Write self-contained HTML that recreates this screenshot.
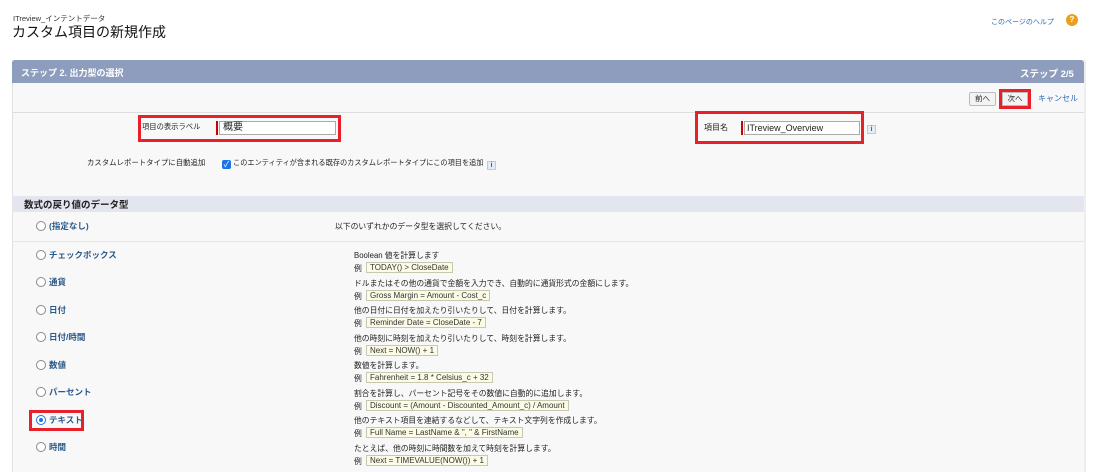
<!DOCTYPE html>
<html><head><meta charset="utf-8"><style>
*{margin:0;padding:0;box-sizing:border-box}
body{width:1098px;height:472px;background:#fff;font-family:"Liberation Sans","Noto Sans CJK JP",sans-serif;position:relative;overflow:hidden;color:#222;font-size:8px}
.a{position:absolute;white-space:nowrap}
.lbl{color:#2a5a8a;font-weight:bold;font-size:8.5px}
.d{font-size:7.8px}
.rad{position:absolute;width:10px;height:10px;border:1px solid #888;border-radius:50%;background:#fff}
.ex{position:absolute;background:#fbfbe6;border:1px solid #c8c8b0;padding:0 3px;height:11px;line-height:9px;font-size:8px;color:#333}
.red{position:absolute;border:3px solid #e8202a}
</style></head><body>
<div class="a" style="left:13px;top:13px;font-size:7.5px;color:#333">ITreview_インテントデータ</div>
<div class="a" style="left:12px;top:22px;font-size:14px;color:#111">カスタム項目の新規作成</div>
<div class="a" style="left:991px;top:17px;font-size:7px;color:#2a6ab0">このページのヘルプ</div>
<div class="a" style="left:1066px;top:14px;width:12px;height:12px;border-radius:50%;background:#e8a020;color:#fff;font-size:8px;font-weight:bold;text-align:center;line-height:12px">?</div>

<div class="a" style="left:12px;top:60px;width:1072px;height:412px;background:#f8f8f8;border-left:1px solid #e0e0e0"></div>
<div class="a" style="left:12px;top:60px;width:1072px;height:23px;background:#8e9dbe;border-radius:3px 3px 0 0"></div>
<div class="a" style="left:21px;top:66px;color:#fff;font-weight:bold;font-size:9px">ステップ 2. 出力型の選択</div>
<div class="a" style="left:1020px;top:66px;color:#fff;font-weight:bold;font-size:9.5px">ステップ 2/5</div>
<div class="a" style="left:1084px;top:60px;width:2px;height:412px;background:#eee"></div>

<div class="a" style="left:12px;top:112px;width:1072px;height:1px;background:#ddd"></div>
<div class="a" style="left:969px;top:92px;width:27px;height:14px;border:1px solid #bbb;border-radius:2px;background:#f3f3f3;font-size:7.5px;text-align:center;line-height:12px">前へ</div>
<div class="a" style="left:1002px;top:92px;width:26px;height:14px;border:1px solid #bbb;background:#f3f3f3;font-size:7.5px;text-align:center;line-height:12px">次へ</div>
<div class="red" style="left:999px;top:89px;width:32px;height:20px"></div>
<div class="a" style="left:1038px;top:93px;font-size:8px;color:#2a6ab0">キャンセル</div>

<div class="red" style="left:138px;top:115px;width:203px;height:27px"></div>
<div class="a" style="left:142px;top:122px;font-size:7.3px">項目の表示ラベル</div>
<div class="a" style="left:216px;top:121px;width:2px;height:14px;background:#c00"></div>
<div class="a" style="left:219px;top:121px;width:117px;height:14px;background:#fff;border:1px solid #aaa;font-size:10px;line-height:12px;padding-left:3px">概要</div>

<div class="red" style="left:695px;top:111px;width:169px;height:33px"></div>
<div class="a" style="left:704px;top:122px;font-size:8px">項目名</div>
<div class="a" style="left:741px;top:121px;width:2px;height:14px;background:#c00"></div>
<div class="a" style="left:744px;top:121px;width:116px;height:14px;background:#fff;border:1px solid #aaa;font-size:9px;line-height:12px;padding-left:2px">ITreview_Overview</div>
<div class="a" style="left:867px;top:125px;width:9px;height:9px;background:#e4ecf6;border:1px solid #bcd;color:#2a6ab0;font-size:7px;text-align:center;line-height:8px;font-weight:bold">i</div>

<div class="a" style="left:87px;top:157px;font-size:7.4px">カスタムレポートタイプに自動追加</div>
<div class="a" style="left:222px;top:160px;width:9px;height:9px;background:#1a73e8;border-radius:2px;color:#fff;font-size:8px;line-height:9px;text-align:center">✓</div>
<div class="a" style="left:233px;top:158px;font-size:7.2px">このエンティティが含まれる既存のカスタムレポートタイプにこの項目を追加</div>
<div class="a" style="left:487px;top:161px;width:9px;height:9px;background:#e4ecf6;border:1px solid #bcd;color:#2a6ab0;font-size:7px;text-align:center;line-height:8px;font-weight:bold">i</div>

<div class="a" style="left:12px;top:196px;width:1072px;height:16px;background:#e3e6ef"></div>
<div class="a" style="left:24px;top:197px;font-size:9.5px;font-weight:bold;color:#222">数式の戻り値のデータ型</div>

<div class="rad" style="left:36px;top:221px"></div><div class="a lbl" style="left:49px;top:220px">(指定なし)</div>
<div class="a d" style="left:335px;top:221px">以下のいずれかのデータ型を選択してください。</div>
<div class="a" style="left:12px;top:241px;width:1072px;height:1px;background:#e6e6e6"></div>

<div class="rad" style="left:36px;top:250px"></div><div class="a lbl" style="left:49px;top:249px">チェックボックス</div>
<div class="a d" style="left:354px;top:250px">Boolean 値を計算します</div>
<div class="a d" style="left:354px;top:263px">例</div><div class="ex" style="left:366px;top:262px">TODAY() &gt; CloseDate</div>

<div class="rad" style="left:36px;top:277px"></div><div class="a lbl" style="left:49px;top:276px">通貨</div>
<div class="a d" style="left:354px;top:278px">ドルまたはその他の通貨で金額を入力でき、自動的に通貨形式の金額にします。</div>
<div class="a d" style="left:354px;top:291px">例</div><div class="ex" style="left:366px;top:290px">Gross Margin = Amount - Cost_c</div>

<div class="rad" style="left:36px;top:305px"></div><div class="a lbl" style="left:49px;top:304px">日付</div>
<div class="a d" style="left:354px;top:305px">他の日付に日付を加えたり引いたりして、日付を計算します。</div>
<div class="a d" style="left:354px;top:318px">例</div><div class="ex" style="left:366px;top:317px">Reminder Date = CloseDate - 7</div>

<div class="rad" style="left:36px;top:332px"></div><div class="a lbl" style="left:49px;top:331px">日付/時間</div>
<div class="a d" style="left:354px;top:333px">他の時刻に時刻を加えたり引いたりして、時刻を計算します。</div>
<div class="a d" style="left:354px;top:346px">例</div><div class="ex" style="left:366px;top:345px">Next = NOW() + 1</div>

<div class="rad" style="left:36px;top:360px"></div><div class="a lbl" style="left:49px;top:359px">数値</div>
<div class="a d" style="left:354px;top:360px">数値を計算します。</div>
<div class="a d" style="left:354px;top:373px">例</div><div class="ex" style="left:366px;top:372px">Fahrenheit = 1.8 * Celsius_c + 32</div>

<div class="rad" style="left:36px;top:387px"></div><div class="a lbl" style="left:49px;top:386px">パーセント</div>
<div class="a d" style="left:354px;top:388px">割合を計算し、パーセント記号をその数値に自動的に追加します。</div>
<div class="a d" style="left:354px;top:401px">例</div><div class="ex" style="left:366px;top:400px">Discount = (Amount - Discounted_Amount_c) / Amount</div>

<div class="red" style="left:29px;top:410px;width:55px;height:21px"></div>
<div class="rad" style="left:36px;top:415px;border-color:#1a73e8"></div><div class="a" style="left:39px;top:418px;width:4px;height:4px;border-radius:50%;background:#1a73e8"></div>
<div class="a lbl" style="left:49px;top:414px">テキスト</div>
<div class="a d" style="left:354px;top:415px">他のテキスト項目を連結するなどして、テキスト文字列を作成します。</div>
<div class="a d" style="left:354px;top:428px">例</div><div class="ex" style="left:366px;top:427px">Full Name = LastName &amp; ", " &amp; FirstName</div>

<div class="rad" style="left:36px;top:442px"></div><div class="a lbl" style="left:49px;top:441px">時間</div>
<div class="a d" style="left:354px;top:443px">たとえば、他の時刻に時間数を加えて時刻を計算します。</div>
<div class="a d" style="left:354px;top:456px">例</div><div class="ex" style="left:366px;top:455px">Next = TIMEVALUE(NOW()) + 1</div>
</body></html>
